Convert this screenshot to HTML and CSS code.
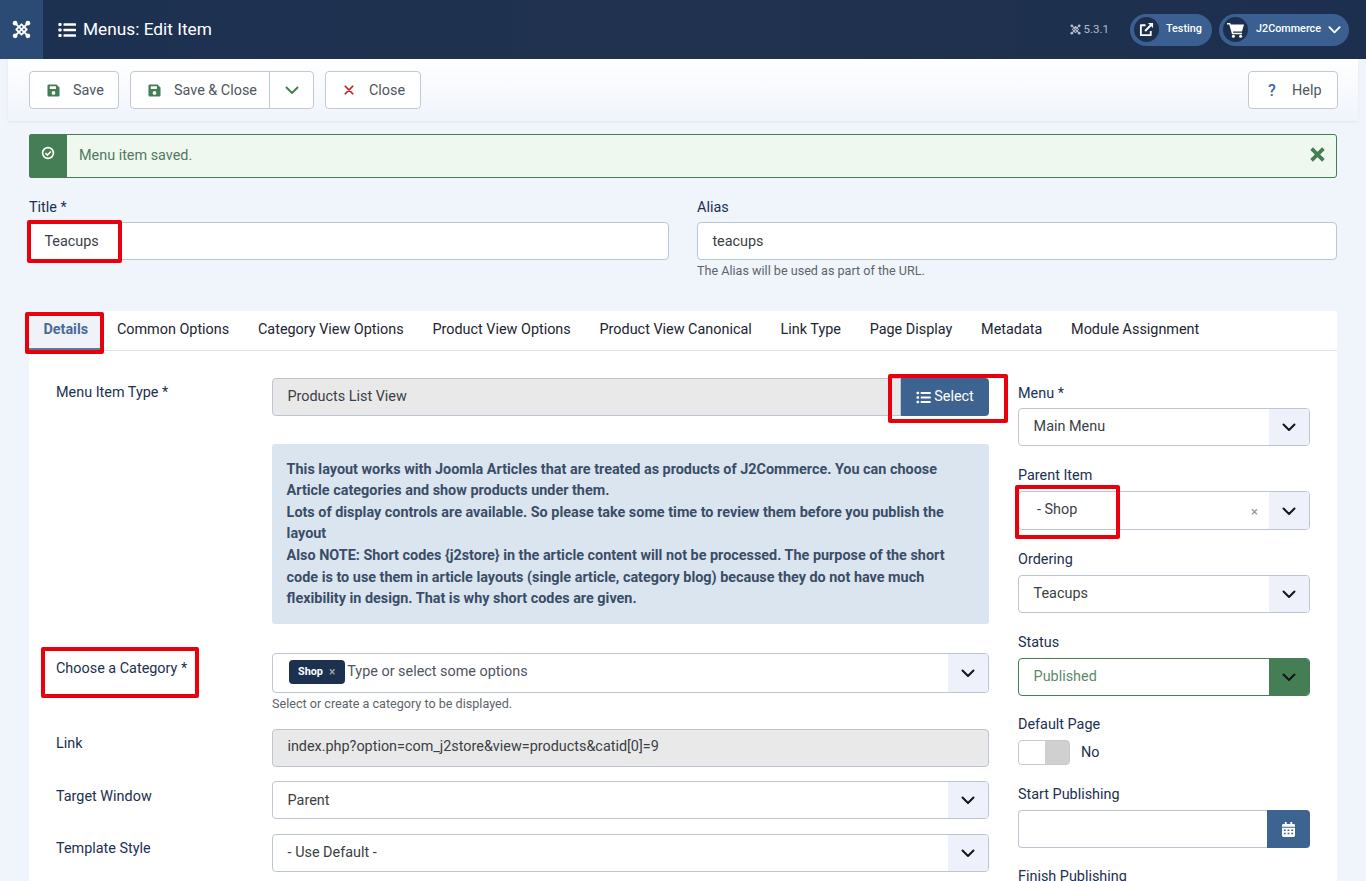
FILE: index.html
```html
<!DOCTYPE html>
<html lang="en">
<head>
<meta charset="utf-8">
<title>Menus: Edit Item</title>
<link rel="stylesheet" href="styles.css">
</head>
<body>
<svg class="defs" width="0" height="0" aria-hidden="true">
  <symbol id="i-list" viewBox="0 0 18 16"><rect x=".4" y="1" width="3.2" height="3" rx=".8"/><rect x=".4" y="6.500" width="3.2" height="3" rx=".8"/><rect x=".4" y="12" width="3.2" height="3" rx=".8"/><rect x="5.500" y="1.200" width="12.500" height="2.600" rx=".6"/><rect x="5.500" y="6.700" width="12.500" height="2.600" rx=".6"/><rect x="5.500" y="12.200" width="12.500" height="2.600" rx=".6"/></symbol>
  <symbol id="i-joomla" viewBox="0 0 20 20"><g fill="none" stroke="currentColor" stroke-width="1.900" stroke-linejoin="round"><path d="M3.500 3.500 16.500 16.500"/><path d="M16.500 3.500 3.500 16.500"/><path d="M10 4.500 15.500 10 10 15.500 4.500 10z"/></g><circle cx="3.300" cy="3.300" r="2.500" fill="currentColor"/><circle cx="16.700" cy="3.300" r="2.500" fill="currentColor"/><circle cx="3.300" cy="16.700" r="2.500" fill="currentColor"/><circle cx="16.700" cy="16.700" r="2.500" fill="currentColor"/></symbol>
  <symbol id="i-save" viewBox="0 0 14 14"><path fill-rule="evenodd" d="M2 .5h8.200L13.500 3.800V12a1.500 1.500 0 0 1-1.500 1.500H2A1.500 1.500 0 0 1 .5 12V2A1.500 1.500 0 0 1 2 .5zM3 2.400v3h6.600v-3zM7 7.600a2 2 0 1 0 0 4 2 2 0 0 0 0-4z"/></symbol>
  <symbol id="i-chev" viewBox="0 0 16 16"><path fill="none" stroke="currentColor" stroke-width="2" stroke-linecap="round" stroke-linejoin="round" d="M2.500 5.500 8 11l5.500-5.500"/></symbol>
</svg>

<header class="topbar">
  <a class="brand"><svg class="brand-icon"><use href="#i-joomla"/></svg></a>
  <svg class="title-icon"><use href="#i-list"/></svg>
  <h1 class="page-title">Menus: Edit Item</h1>
  <div class="top-right">
    <span class="version"><svg class="version-icon"><use href="#i-joomla"/></svg>5.3.1</span>
    <a class="pill pill-testing">
      <span class="pill-circle">
        <svg viewBox="0 0 16 16" class="pill-svg"><path fill="none" stroke="#fff" stroke-width="2" stroke-linejoin="round" d="M12.500 9.500V14H2V3.500h5"/><path fill="none" stroke="#fff" stroke-width="2.200" d="M6.500 9.500 14 2"/><path fill="#fff" d="M9.500 1H15v5.500z"/></svg>
      </span>
      <span class="pill-text">Testing</span>
    </a>
    <a class="pill pill-user">
      <span class="pill-circle">
        <svg viewBox="0 0 18 16" class="pill-svg pill-cart"><path fill="#fff" d="M0 1h3.200l.6 1.600H17l-2 7H6l.3 1.200H15v1.500H5L2.300 2.500H0z"/><circle cx="6.400" cy="14.300" r="1.500" fill="#fff"/><circle cx="13.600" cy="14.300" r="1.500" fill="#fff"/></svg>
      </span>
      <span class="pill-text">J2Commerce</span>
      <svg class="pill-chev"><use href="#i-chev"/></svg>
    </a>
  </div>
</header>

<div class="toolbar">
  <button class="btn btn-save"><svg class="ico-save"><use href="#i-save"/></svg><span>Save</span></button>
  <div class="btn-group">
    <button class="btn-inner btn-saveclose"><svg class="ico-save"><use href="#i-save"/></svg><span>Save &amp; Close</span></button>
    <button class="btn-inner btn-caret"><svg class="ico-caret"><use href="#i-chev"/></svg></button>
  </div>
  <button class="btn btn-close">
    <svg class="ico-x" viewBox="0 0 12 12"><path d="M1.500 1.500l9 9M10.500 1.500l-9 9" stroke="#c41c1c" stroke-width="2" stroke-linecap="round"/></svg>
    <span>Close</span>
  </button>
  <button class="btn btn-help"><span class="q">?</span><span>Help</span></button>
</div>

<main class="content">
  <div class="alert">
    <div class="alert-side">
      <svg viewBox="0 0 14 14" class="alert-check"><circle cx="7" cy="7" r="5.400" fill="none" stroke="#fff" stroke-width="1.700"/><path d="M4.400 7.100l2 2 3.400-3.600" fill="none" stroke="#fff" stroke-width="1.700"/></svg>
    </div>
    <div class="alert-text">Menu item saved.</div>
    <svg viewBox="0 0 14 14" class="alert-x"><path d="M1.500 1.500l11 11M12.500 1.500l-11 11" stroke="#457d54" stroke-width="3.400"/></svg>
  </div>

  <div class="title-row">
    <div class="title-col">
      <label class="lbl">Title *</label>
      <div class="input">Teacups</div>
      <span class="mark mark-title"></span>
    </div>
    <div class="title-col">
      <label class="lbl">Alias</label>
      <div class="input">teacups</div>
      <div class="hint">The Alias will be used as part of the URL.</div>
    </div>
  </div>

  <section class="panel">
    <nav class="tabs">
      <a class="tab active">Details</a>
      <a class="tab">Common Options</a>
      <a class="tab">Category View Options</a>
      <a class="tab">Product View Options</a>
      <a class="tab">Product View Canonical</a>
      <a class="tab">Link Type</a>
      <a class="tab">Page Display</a>
      <a class="tab">Metadata</a>
      <a class="tab">Module Assignment</a>
      <span class="mark mark-tab"></span>
    </nav>
    <div class="panel-body">
      <div class="main-col">
        <div class="row row-type">
          <label class="row-lbl">Menu Item Type *</label>
          <div class="ctl">
            <div class="type-group">
              <div class="input readonly grow">Products List View</div>
              <button class="btn-select"><svg class="sel-icon"><use href="#i-list"/></svg>Select</button>
            </div>
            <span class="mark mark-select"></span>
          </div>
        </div>
        <div class="row row-info">
          <div class="spacer"></div>
          <div class="info">
            This layout works with Joomla Articles that are treated as products of J2Commerce. You can choose Article categories and show products under them.<br>
            Lots of display controls are available. So please take some time to review them before you publish the layout<br>
            Also NOTE: Short codes {j2store} in the article content will not be processed. The purpose of the short code is to use them in article layouts (single article, category blog) because they do not have much flexibility in design. That is why short codes are given.
          </div>
        </div>
        <div class="row row-cat">
          <label class="row-lbl">Choose a Category *<span class="mark mark-cat"></span></label>
          <div class="ctl">
            <div class="select chips">
              <span class="chip">Shop <i class="chip-x">×</i></span>
              <span class="placeholder">Type or select some options</span>
              <span class="arrow"><svg class="chev"><use href="#i-chev"/></svg></span>
            </div>
            <div class="hint hint-cat">Select or create a category to be displayed.</div>
          </div>
        </div>
        <div class="row row-link">
          <label class="row-lbl">Link</label>
          <div class="ctl"><div class="input readonly link-input">index.php?option=com_j2store&amp;view=products&amp;catid[0]=9</div></div>
        </div>
        <div class="row row-target">
          <label class="row-lbl">Target Window</label>
          <div class="ctl"><div class="select"><span class="val">Parent</span><span class="arrow"><svg class="chev"><use href="#i-chev"/></svg></span></div></div>
        </div>
        <div class="row">
          <label class="row-lbl">Template Style</label>
          <div class="ctl"><div class="select"><span class="val">- Use Default -</span><span class="arrow"><svg class="chev"><use href="#i-chev"/></svg></span></div></div>
        </div>
      </div>

      <aside class="side-col">
        <div class="grp grp-first">
          <label class="lbl">Menu *</label>
          <div class="select"><span class="val">Main Menu</span><span class="arrow"><svg class="chev"><use href="#i-chev"/></svg></span></div>
        </div>
        <div class="grp">
          <label class="lbl">Parent Item</label>
          <div class="select select-parent"><span class="val val-parent">- Shop</span><i class="clear">×</i><span class="arrow"><svg class="chev"><use href="#i-chev"/></svg></span></div>
          <span class="mark mark-parent"></span>
        </div>
        <div class="grp">
          <label class="lbl">Ordering</label>
          <div class="select"><span class="val">Teacups</span><span class="arrow"><svg class="chev"><use href="#i-chev"/></svg></span></div>
        </div>
        <div class="grp">
          <label class="lbl">Status</label>
          <div class="select select-ok"><span class="val">Published</span><span class="arrow"><svg class="chev"><use href="#i-chev"/></svg></span></div>
        </div>
        <div class="grp grp-switch">
          <label class="lbl">Default Page</label>
          <div class="switch-row"><span class="switch"><span class="knob"></span></span><span class="switch-text">No</span></div>
        </div>
        <div class="grp grp-date">
          <label class="lbl">Start Publishing</label>
          <div class="date">
            <div class="date-input"></div>
            <button class="date-btn"><svg viewBox="0 0 14 16" class="cal"><path fill="#fff" fill-rule="evenodd" d="M3 0h2v2h4V0h2v2h1.500A1.500 1.500 0 0 1 14 3.500V5H0V3.500A1.500 1.500 0 0 1 1.500 2H3zM0 6h14v8.500a1.500 1.500 0 0 1-1.500 1.500h-11A1.500 1.500 0 0 1 0 14.500zM2 8v1.500h2V8zm4 0v1.500h2V8zm4 0v1.500h2V8zM2 11.500V13h2v-1.500zm4 0V13h2v-1.500zm4 0V13h2v-1.500z"/></svg></button>
          </div>
        </div>
        <div class="grp grp-finish">
          <label class="lbl">Finish Publishing</label>
        </div>
      </aside>
    </div>
  </section>
</main>
</body>
</html>
```

FILE: styles.css
```css
* { box-sizing: border-box; }
html, body { margin: 0; height: 100%; overflow: hidden; }
body {
  font-family: Roboto, "Liberation Sans", sans-serif;
  font-size: 14.4px;
  line-height: 21.6px;
  color: #22262a;
  background: #f0f4fb;
}
.defs { position: absolute; }
button { font: inherit; cursor: pointer; }

/* Top bar */
.topbar {
  height: 59px;
  display: flex;
  align-items: center;
  background: linear-gradient(90deg, #1c3050, #20324f 50%, #1c2f4e);
  color: #fff;
}
.brand {
  width: 43px;
  height: 59px;
  background: #2b4a74;
  display: flex;
  align-items: center;
  justify-content: center;
}
.brand-icon { width: 19px; height: 19px; color: #fff; }
.title-icon { width: 18px; height: 16px; margin-left: 15px; fill: #fff; }
.page-title { margin: 0 0 0 7px; font-size: 17.3px; font-weight: 400; line-height: 59px; }
.top-right { margin-left: auto; display: flex; align-items: center; padding-right: 17px; }
.version { display: flex; align-items: center; gap: 3px; font-size: 11.5px; color: #b2bccb; margin-right: 21px; }
.version-icon { width: 11px; height: 11px; color: #b2bccb; }
.pill {
  height: 32px;
  border-radius: 16px;
  background: #3a5f90;
  display: flex;
  align-items: center;
  padding-left: 4px;
  font-size: 10.8px;
  font-weight: 500;
  color: #fff;
}
.pill-testing { width: 82px; margin-right: 7px; }
.pill-user { width: 130px; }
.pill-circle {
  width: 25px;
  height: 25px;
  border-radius: 50%;
  background: #1c2f4e;
  display: flex;
  align-items: center;
  justify-content: center;
}
.pill-svg { width: 15px; height: 15px; }
.pill-cart { width: 18px; height: 16px; }
.pill-text { margin-top: -2px; }
.pill-testing .pill-text { margin-left: 7px; }
.pill-user .pill-text { margin-left: 8px; }
.pill-chev { width: 15px; height: 15px; margin-left: 6px; color: #fff; }

/* Toolbar */
.toolbar {
  height: 62px;
  display: flex;
  align-items: flex-start;
  gap: 11px;
  background: linear-gradient(#fff, #f0f4fb);
  box-shadow: 0 1px 2px rgba(160,175,200,.2);
  margin: 0 8px;
  padding: 12px 20px 0 21px;
}
.btn, .btn-group {
  height: 38px;
  background: #fff;
  border: 1px solid #c3c9d1;
  border-radius: 4px;
  color: #4f5660;
}
.btn {
  display: flex;
  align-items: center;
  padding: 0;
}
.toolbar span { padding-top: 1px; }
.btn-save { width: 90px; padding-left: 17px; }
.btn-group { display: flex; width: 184px; }
.btn-inner { border: 0; background: none; height: 100%; display: flex; align-items: center; color: #4f5660; padding: 0; }
.btn-saveclose { width: 139px; padding-left: 17px; border-right: 1px solid #c3c9d1; }
.btn-caret { flex: 1; justify-content: center; }
.ico-save { width: 13px; height: 13px; fill: #457d54; margin-right: 13px; }
.ico-caret { width: 16px; height: 16px; color: #457d54; }
.btn-close { width: 96px; padding-left: 18px; }
.ico-x { width: 10px; height: 10px; margin-right: 15px; }
.btn-help { width: 90px; margin-left: auto; padding-left: 19px; }
.q { color: #3b6aa8; font-size: 16px; font-weight: 500; margin-right: 16px; width: 8px; }

/* Content */
.content { padding: 13px 29px 0; }
.alert {
  height: 44px;
  display: flex;
  align-items: center;
  background: #eff8ef;
  border: 1px solid #457d54;
  border-radius: 3px;
}
.alert-side {
  width: 38px;
  height: 44px;
  margin: -1px 0 -1px -1px;
  background: #457d54;
  border-radius: 3px 0 0 3px;
  display: flex;
  justify-content: center;
  padding-top: 12px;
}
.alert-check { width: 14px; height: 14px; }
.alert-text { margin-left: 12px; color: #4f7a5f; }
.alert-x { width: 15px; height: 15px; margin-left: auto; margin-right: 11px; margin-top: -4px; }

.title-row { display: flex; gap: 28px; margin-top: 18px; height: 115px; }
.title-col { flex: 1; position: relative; }
.lbl { display: block; height: 22px; margin-bottom: 4px; color: #1c3050; padding-top: 1px; }
.input {
  height: 38px;
  background: #fff;
  border: 1px solid #bcc6d2;
  border-radius: 4px;
  padding: 0 14.4px;
  line-height: 37px;
  color: #3a3f45;
}
.readonly { background: #e9e9e9; line-height: 35px; }
.link-input { line-height: 34px; }
.grow { flex: 1; border-radius: 4px 0 0 4px; }
.hint { font-size: 12.6px; line-height: 18px; color: #5d646c; margin-top: 2px; }

.panel { background: #fff; }
.tabs {
  height: 40px;
  display: flex;
  border-bottom: 1px solid #dfe3e7;
  position: relative;
}
.tab { padding: 0 14.4px; line-height: 37px; color: #1c2530; }
.tab.active {
  font-weight: 700;
  color: #496a98;
  background: #eff3f8;
  border-bottom: 3px solid #62789a;
  height: 40px;
}
.panel-body { display: flex; padding: 27px 27px 0; }
.main-col { width: 933px; flex: none; }
.row { display: flex; margin-bottom: 14px; }
.row-lbl { width: 216px; flex: none; padding-top: 4px; color: #1c3050; position: relative; height: 24px; }
.spacer { width: 216px; flex: none; }
.ctl { flex: 1; position: relative; min-width: 0; }
.row-type { margin-bottom: 28px; }
.type-group { display: flex; }
.btn-select {
  width: 88px;
  height: 38px;
  border: 0;
  background: #3d6390;
  color: #fff;
  border-radius: 0 4px 4px 0;
  display: flex;
  align-items: center;
  justify-content: center;
  gap: 3px;
}
.sel-icon { width: 15px; height: 13px; fill: #fff; }
.info {
  flex: 1;
  min-width: 0;
  background: #dbe5ef;
  border-radius: 3px;
  height: 180px;
  padding: 14.6px 14.6px;
  font-weight: 700;
  line-height: 21.6px;
  color: #3a4d68;
}
.row-info { margin-bottom: 29px; }
.row-cat { margin-bottom: 16px; }
.row-cat .row-lbl { padding-top: 5px; }
.row-target { margin-bottom: 15px; }
.row-target .row-lbl { padding-top: 5px; }
.row-target .val { padding-top: 2px; }

.select {
  height: 38px;
  display: flex;
  align-items: center;
  background: #fff;
  border: 1px solid #bcc6d2;
  border-radius: 4px;
  color: #3a3f45;
  position: relative;
  overflow: hidden;
}
.val { padding-left: 14.6px; flex: 1; }
.arrow {
  width: 40px;
  align-self: stretch;
  background: #eef1fa;
  display: flex;
  align-items: center;
  justify-content: center;
  margin-left: auto;
  flex: none;
}
.chev { width: 16px; height: 16px; color: #11151c; }
.chips { height: 40px; }
.chip {
  background: #1c3050;
  color: #fff;
  font-size: 10.8px;
  font-weight: 700;
  height: 24px;
  line-height: 24px;
  border-radius: 4px;
  padding: 0 10px 0 9px;
  margin: -2px 0 0 16px;
  display: flex;
  align-items: center;
  gap: 6px;
}
.chip-x { font-style: normal; color: #a9b3c2; font-weight: 400; font-size: 12px; }
.placeholder { margin: -2px 0 0 2px; color: #4f5660; }
.hint-cat { height: 18px; }
.select-parent { height: 39px; }
.val-parent { padding-left: 18px; flex: none; margin-top: -1px; }
.clear { font-style: normal; color: #8b929a; margin-left: auto; margin-right: 11px; font-size: 13px; margin-top: 3px; }
.clear + .arrow { margin-left: 0; }
.select-ok { border-color: #457d54; color: #5d8a6c; }
.select-ok .arrow { background: #457d54; }

.side-col { width: 292px; margin-left: 29px; flex: none; padding-top: 3px; }
.grp { margin-bottom: 18px; position: relative; }
.side-col .lbl { margin-bottom: 5px; padding-top: 1px; }
.side-col .grp-first .lbl { padding-top: 2px; }
.side-col .grp-switch .lbl { margin-bottom: 4px; padding-top: 0; }
.grp-date { margin-bottom: 16px; }
.side-col .grp-finish .lbl { padding-top: 2px; }
.switch-row { display: flex; align-items: center; height: 25px; }
.switch {
  width: 52px;
  height: 25px;
  border: 1px solid #c3c9d1;
  border-radius: 4px;
  background: #d0d0d0;
  display: block;
  overflow: hidden;
}
.knob { display: block; width: 26px; height: 100%; background: #fff; }
.switch-text { margin-left: 11px; color: #1c3050; }
.date { display: flex; height: 38px; }
.date-input { flex: 1; background: #fff; border: 1px solid #bcc6d2; border-right: 0; border-radius: 4px 0 0 4px; }
.date-btn {
  width: 43px;
  border: 0;
  background: #3d6390;
  border-radius: 0 4px 4px 0;
  display: flex;
  align-items: center;
  justify-content: center;
}
.cal { width: 13px; height: 15px; }

/* Red annotation frames */
.mark { position: absolute; border: 4px solid #e8000d; border-radius: 2px; pointer-events: none; }
.mark-title { left: -2px; top: 24px; width: 95px; height: 43px; }
.mark-tab { left: -4px; top: 1px; width: 79px; height: 42px; }
.mark-select { left: 616px; top: -4px; width: 120px; height: 49px; }
.mark-cat { left: -15px; top: -6px; width: 158px; height: 51px; }
.mark-parent { left: -3px; top: 21px; width: 105px; height: 54px; }
```
